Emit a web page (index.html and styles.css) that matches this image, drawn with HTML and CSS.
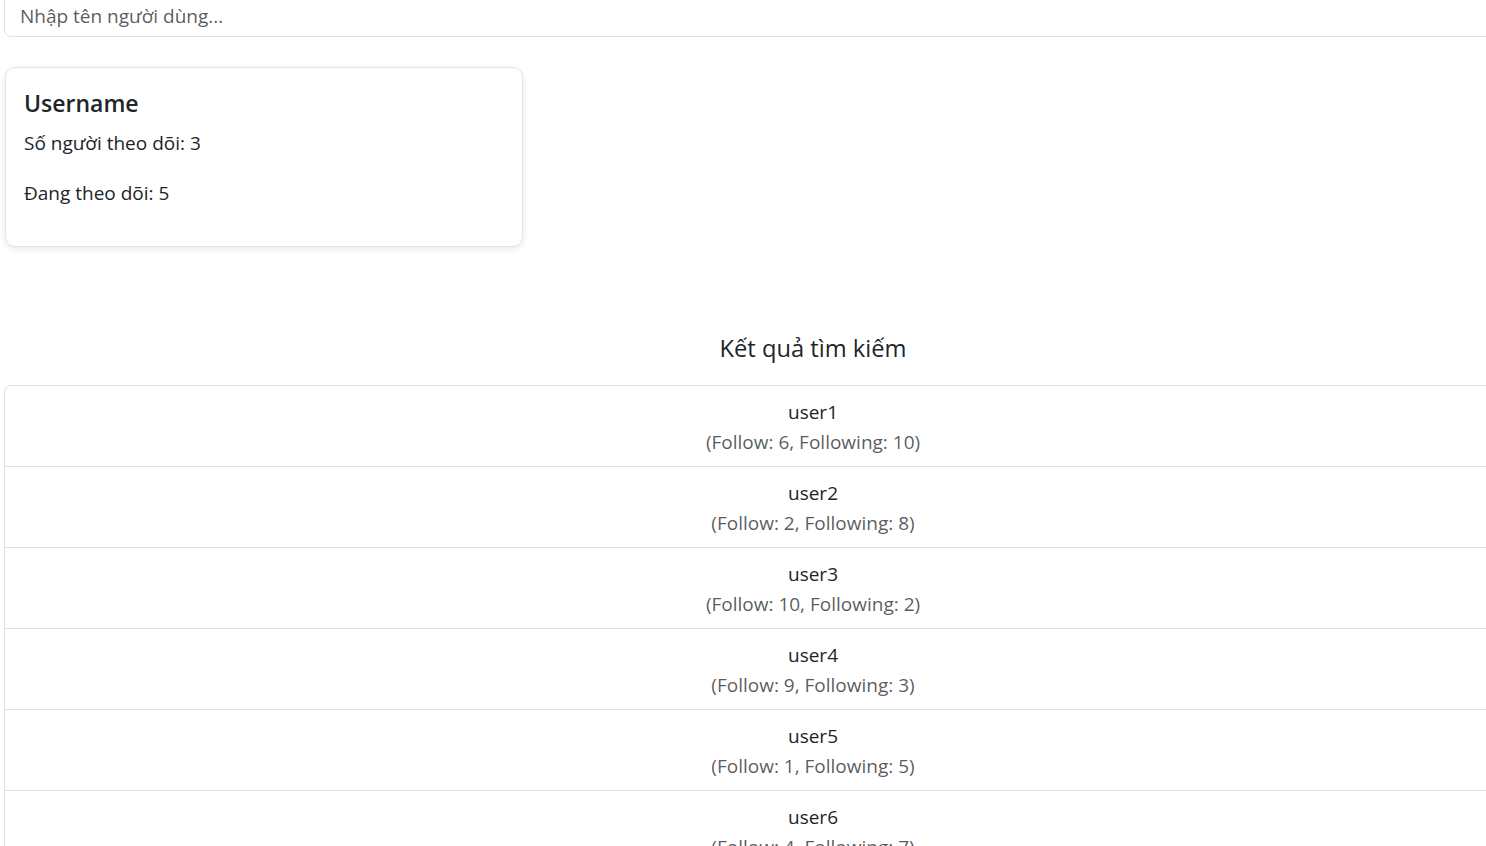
FILE: index.html
```html
<!DOCTYPE html>
<html lang="vi">
<head>
<meta charset="utf-8">
<title>Tìm kiếm người dùng</title>
<link rel="stylesheet" href="styles.css">
</head>
<body>
<div class="wrap">
  <input class="search" type="text" placeholder="Nhập tên người dùng...">

  <div class="profile-card">
    <h5 class="profile-name">Username</h5>
    <p class="profile-stat">Số người theo dõi: 3</p>
    <p class="profile-stat">Đang theo dõi: 5</p>
  </div>

  <section class="results">
    <h5 class="results-title">Kết quả tìm kiếm</h5>
    <ul class="result-list">
      <li class="result-item"><div class="result-name">user1</div><div class="result-meta">(Follow: 6, Following: 10)</div></li>
      <li class="result-item"><div class="result-name">user2</div><div class="result-meta">(Follow: 2, Following: 8)</div></li>
      <li class="result-item"><div class="result-name">user3</div><div class="result-meta">(Follow: 10, Following: 2)</div></li>
      <li class="result-item"><div class="result-name">user4</div><div class="result-meta">(Follow: 9, Following: 3)</div></li>
      <li class="result-item"><div class="result-name">user5</div><div class="result-meta">(Follow: 1, Following: 5)</div></li>
      <li class="result-item"><div class="result-name">user6</div><div class="result-meta">(Follow: 4, Following: 7)</div></li>
    </ul>
  </section>
</div>
</body>
</html>
```
FILE: styles.css
```css
html, body {
  margin: 0;
  padding: 0;
  overflow: hidden;
  background: #fff;
}

body {
  font-family: "Open Sans", "Noto Sans", sans-serif;
  font-size: 19px;
  line-height: 30px;
  color: #212529;
}

.wrap {
  width: 1618px;
  margin-left: 4px;
  display: flex;
  flex-direction: column;
}

.search {
  display: block;
  box-sizing: border-box;
  width: 100%;
  height: 45px;
  margin: -8px 0 0;
  padding: 2px 15px 0;
  border: 1px solid #dee2e6;
  border-radius: 7px;
  font-family: inherit;
  font-size: 19px;
  color: #212529;
  background: #fff;
  outline: none;
}

.search::placeholder {
  color: rgba(33, 37, 41, 0.75);
  opacity: 1;
}

.profile-card {
  box-sizing: border-box;
  width: 518px;
  margin-top: 30px;
  margin-left: 1px;
  padding: 20px 20px 18px 18px;
  border: 1px solid #e3e3e3;
  border-radius: 10px;
  box-shadow: 0 2px 7px rgba(0, 0, 0, 0.09);
}

.profile-name {
  margin: 0 0 10px;
  font-size: 23px;
  font-weight: 600;
  line-height: 30px;
}

.profile-stat {
  margin: 0 0 20px;
}

.results {
  margin-top: 86px;
}

.results-title {
  margin: 0 0 22px;
  font-size: 23.7px;
  font-weight: 400;
  line-height: 30px;
  text-align: center;
}

.result-list {
  list-style: none;
  margin: 0;
  padding: 0;
  border: 1px solid #dee2e6;
  border-radius: 7px;
}

.result-item {
  padding: 11px 20px 9px;
  text-align: center;
  border-top: 1px solid #dee2e6;
}

.result-item:first-child {
  border-top: 0;
}

.result-meta {
  color: rgba(33, 37, 41, 0.75);
}
```
